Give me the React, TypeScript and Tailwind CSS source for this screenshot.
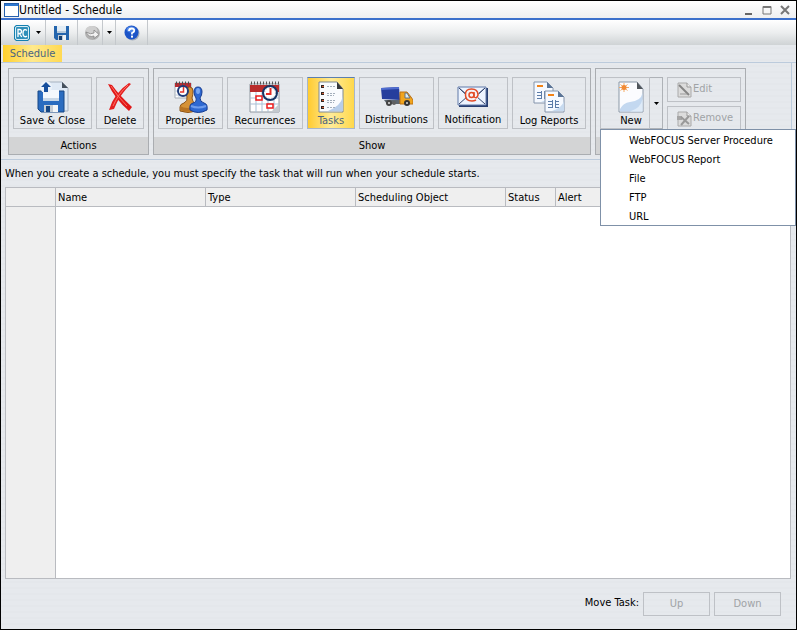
import { useState, type ReactNode } from "react";

function RcIcon() {
  return (
    <svg width="18" height="18" viewBox="0 0 18 18" aria-hidden="true">
      <path d="M3 1h12l2 2v12l-2 2H3l-2-2V3z" fill="#1580b0" />
      <rect x="2.500" y="2.500" width="13" height="13" rx="1.500" fill="#2f8fba" stroke="#d9eef7" />
      <path d="M5 13V5.500h1.500q2 0 2 2t-2 2H5M6.500 9.500L8.700 13" fill="none" stroke="#fff" strokeWidth="1.300" />
      <path d="M14 6.500q-1.200-1-2.300-.8-1.700.5-1.700 3.500t1.700 3.500q1.200.2 2.300-.8" fill="none" stroke="#fff" strokeWidth="1.300" />
    </svg>
  );
}

function DiskIcon() {
  return (
    <svg width="16" height="16" viewBox="0 0 16 16" aria-hidden="true">
      <path d="M0 1h15v14H2l-2-2z" fill="#2465ad" />
      <path d="M3 1h9v7H3z" fill="#e3edf5" />
      <path d="M3 6h9v2H3z" fill="#b9cbdb" />
      <path d="M4 10h8v5H4z" fill="#bfc9d3" />
      <path d="M5 11h3v4H5z" fill="#17406f" />
      <path d="M9 10h3v5H9z" fill="#eef2f5" />
    </svg>
  );
}

function RunIcon() {
  return (
    <svg width="17" height="17" viewBox="0 0 17 17" aria-hidden="true">
      <ellipse cx="8.500" cy="9" rx="7.500" ry="7" fill="#b0b0b0" />
      <ellipse cx="7.500" cy="6.500" rx="6" ry="4.500" fill="#cfcfcf" />
      <path d="M2 8q5 3 8 1V6l5 4.500-5 4V12Q5 14 2 8z" fill="#f2f2f2" stroke="#858585" strokeWidth=".8" />
    </svg>
  );
}

function HelpIcon() {
  return (
    <svg width="16" height="16" viewBox="0 0 16 16" aria-hidden="true">
      <circle cx="8.500" cy="8.500" r="7" fill="#a3acba" />
      <circle cx="7.500" cy="7.500" r="7" fill="#1d55c8" />
      <ellipse cx="7" cy="4.500" rx="4.500" ry="3" fill="#4f86e6" />
      <path d="M5 6q0-2.500 2.700-2.500T10.200 6Q10 7.200 8 8v1.500" fill="none" stroke="#fff" strokeWidth="1.800" />
      <rect x="7" y="10.600" width="2" height="2" fill="#fff" />
    </svg>
  );
}

function SaveCloseIcon() {
  return (
    <svg width="32" height="32" viewBox="0 0 32 32" aria-hidden="true">
      <path d="M8 1h17l6 6v23H8z" fill="#dfe9f5" stroke="#a7b2c0" />
      <path d="M25 1v6h6z" fill="#46505c" />
      <path d="M1 10h26v21H4l-3-3z" fill="#2a6cc0" stroke="#174784" />
      <path d="M6 9h16v11H6z" fill="#f3f8fd" />
      <path d="M6 17h16v3H6z" fill="#c8d8e8" />
      <path d="M7 24h14v7H7z" fill="#c6ced6" />
      <path d="M9 25h4v6H9z" fill="#174784" />
      <path d="M16 24h5v7h-5z" fill="#f4f6f8" />
      <circle cx="9" cy="6" r="6" fill="#edf3fa" />
      <path d="M9 1l5 5h-3v5H7V6H4z" fill="#174f9d" />
    </svg>
  );
}

function DeleteIcon() {
  return (
    <svg width="32" height="32" viewBox="0 0 32 32" aria-hidden="true">
      <path d="M4 3L8 4Q15 14 28 26L25 30Q11 18 4 3z" fill="#e01818" />
      <path d="M25 2L27 3Q16 13 10 28L5 29Q10 12 25 2z" fill="#e42020" />
      <path d="M7 5Q13 15 23 25M24 4Q14 13 9 25" fill="none" stroke="#ff6e62" strokeWidth="1" />
    </svg>
  );
}

function PropertiesIcon() {
  return (
    <svg width="34" height="32" viewBox="0 0 34 32" aria-hidden="true">
      <path d="M1 2h16v15H1z" fill="#fff" stroke="#a4acb5" />
      <path d="M1 2h16v4H1z" fill="#b62c32" />
      <path d="M2 2h15" stroke="#4c4c4c" strokeDasharray="1 2" strokeWidth="3" />
      <path d="M1 10h16M1 14h16M5 6v11M13 6v11" stroke="#bcc8d8" />
      <path d="M12 10q0-4 3.500-4T19 10q0 4-1 7 0 4 4 6v7q-8 3-16 0v-4q0-3 4-4 4-2 3-6-1-3-1-6z" fill="#d69237" stroke="#8b5418" />
      <path d="M6 25q7 4 16 0v4q-8 3-16 0z" fill="#b87323" />
      <path d="M20 11q0-5 4-5t4 5q0 3-2 6 0 4 4 5 4 1 3 7-9 5-17 0-1-6 3-7 4-1 3-5-2-3-2-6z" fill="#2d68d1" stroke="#173c91" />
      <ellipse cx="24" cy="10" rx="2" ry="3" fill="#79a7f2" />
      <path d="M17 25q7 3 15 0" stroke="#6d9ced" strokeWidth="2" fill="none" />
      <circle cx="9" cy="10" r="5" fill="#fff" stroke="#203b78" strokeWidth="2" />
      <path d="M9.500 6v5H6" stroke="#e3342c" strokeWidth="1.500" fill="none" />
    </svg>
  );
}

function RecurrencesIcon() {
  return (
    <svg width="32" height="32" viewBox="0 0 32 32" aria-hidden="true">
      <path d="M1 3h29v28H1z" fill="#fff" stroke="#8e969f" />
      <path d="M1 4h29v7H1z" fill="#b92c2c" />
      <path d="M2 2h28" stroke="#555" strokeWidth="3" strokeDasharray="1 2" />
      <path d="M1 17h29M1 23h29M7 11v20M13 11v20M19 11v20M25 11v20" stroke="#a9bfd5" />
      <path d="M7 15h6v4H7zM18 23h6v4h-6z" fill="#fff" stroke="#ed1c1c" strokeWidth="1.500" />
      <path d="M22 31l8-8v8z" fill="#c4c9ce" />
      <circle cx="21" cy="12" r="7" fill="#fff" stroke="#173565" strokeWidth="2" />
      <circle cx="21" cy="12" r="5.500" fill="none" stroke="#7d93b8" strokeDasharray="1 2" />
      <path d="M21.500 7v6H17" fill="none" stroke="#e52b24" strokeWidth="2" />
    </svg>
  );
}

function TasksIcon() {
  return (
    <svg width="28" height="32" viewBox="0 0 28 32" aria-hidden="true">
      <path d="M2 1h18l6 7v23H2z" fill="#f9fbfe" stroke="#7e8994" />
      <path d="M26 15Q24 25 11 30h15z" fill="#b7cde9" />
      <path d="M20 1v7h6z" fill="#35383c" />
      <path d="M4 4h3v3H4zM4 11h3v3H4zM4 18h3v3H4zM4 25h3v3H4z" fill="#322722" />
      <path d="M5 5h2v1H5zM5 12h2v1H5zM5 19h2v1H5zM5 26h2v1H5z" fill="#cc5b38" />
      <path d="M10 5.500h8M10 12.500h9M10 14.500h7M10 19.500h9M10 21.500h7M10 26.500h8" stroke="#a3aebb" strokeDasharray="2 1" />
    </svg>
  );
}

function TruckIcon() {
  return (
    <svg width="32" height="20" viewBox="0 0 32 20" aria-hidden="true">
      <path d="M3 13h27v4H6z" fill="#5c6670" />
      <path d="M0 1l18-1 1 13L1 12z" fill="#263e9d" />
      <path d="M0 1l18-1v2L0 3z" fill="#506dd0" />
      <path d="M19 5h7l4 5 2 3v4H19z" fill="#f1a51d" stroke="#bd7112" />
      <path d="M24 6h2l3 5h-5z" fill="#d8eaf5" stroke="#66717a" />
      <circle cx="8" cy="16" r="3" fill="#444" />
      <circle cx="13" cy="16" r="2" fill="#606060" />
      <circle cx="26" cy="16" r="3" fill="#333" />
      <circle cx="8" cy="16" r="1" fill="#ddd" /><circle cx="26" cy="16" r="1" fill="#ddd" />
    </svg>
  );
}

function MailIcon() {
  return (
    <svg width="32" height="22" viewBox="0 0 32 22" aria-hidden="true">
      <path d="M2 2h29v19H2z" fill="#273e70" />
      <path d="M1 1h28v18H1z" fill="#edf4ff" stroke="#6079a8" />
      <path d="M2 2l9 8-9 8M28 2l-9 8 9 8M2 2l13 12L28 2" fill="none" stroke="#35466e" />
      <circle cx="15" cy="9" r="6.500" fill="#f6f1f5" />
      <circle cx="14.500" cy="9" r="2.500" fill="none" stroke="#e34b27" strokeWidth="1.500" />
      <path d="M17 6v5q3 2 4-2 0-6-6.500-6T8.500 9q0 6 6.500 6 2 0 4-1" fill="none" stroke="#e34b27" strokeWidth="1.500" />
    </svg>
  );
}

function LogIcon() {
  return (
    <svg width="32" height="32" viewBox="0 0 32 32" aria-hidden="true">
      {[[1, 1], [12, 10]].map(([x, y]) => (
        <g key={x} transform={`translate(${x} ${y})`}>
          <path d="M0 0h13l6 6v15H0z" fill="#f5f9ff" stroke="#8494ab" />
          <path d="M19 10Q17 17 7 20h12z" fill="#c7daef" />
          <path d="M13 0v6h6z" fill="#5b7597" />
          <path d="M3 3h6v2H3z" fill="#f28317" />
          <path d="M3 10.500h5M10 10.500h4M3 13.500h5M10 13.500h4M3 16.500h5M10 16.500h4M7.500 9v8M10.500 9v8" stroke="#5c7ca8" />
        </g>
      ))}
    </svg>
  );
}

function NewIcon() {
  return (
    <svg width="28" height="32" viewBox="0 0 28 32" aria-hidden="true">
      <path d="M2 1h18l6 7v23H2z" fill="#fbfcff" stroke="#8b98a7" />
      <path d="M25.500 12Q24 20 13 21 6 22 3 28v2.500h22.500z" fill="#c3d8f0" />
      <path d="M25.500 18Q24 27 13 30.500h12.500z" fill="#dfebf8" />
      <path d="M20 1v7h6z" fill="#50565c" />
      <path d="M7 2v9M3.500 3.500l7 6M3.500 9.500l7-6M2 6.500h10" stroke="#f5a962" strokeWidth="1" />
      <circle cx="7" cy="6.500" r="2.500" fill="#f18a34" />
    </svg>
  );
}

function GrayIcon({ remove = false }: { remove?: boolean }) {
  return (
    <svg width="16" height="16" viewBox="0 0 16 16" aria-hidden="true">
      <path d="M2 1h9l4 4v10H2z" fill="#dcdcdc" stroke="#aaa" />
      <path d="M11 1v4h4" fill="#eee" stroke="#999" />
      {remove ? (
        <><path d="M1 5h5v4H1z" fill="#a5a5a5" /><path d="M5 6l8 7M13 5l-8 9" stroke="#999" strokeWidth="2" /></>
      ) : (
        <><path d="M3 3l10 10" stroke="#858585" strokeWidth="2" /><path d="M4 12h7" stroke="#999" /></>
      )}
    </svg>
  );
}

function Caret() {
  return (
    <svg width="5" height="3" viewBox="0 0 5 3" aria-hidden="true"><path d="M0 0h5L2.500 3z" fill="#000" /></svg>
  );
}

function RibbonButton({ label, width, icon, active = false, onClick }: {
  label: string; width: string; icon: ReactNode; active?: boolean; onClick?: () => void;
}) {
  const look = active
    ? "border-[#a8b6c8] border-t-[#5c7fae] bg-[linear-gradient(to_right,#ffcb30,#ffeb98_50%,#ffd84a)] text-[#4a6480]"
    : "border-[#bec1c6]";
  return (
    <button type="button" onClick={onClick} className={`flex h-[52px] shrink-0 flex-col items-center border pt-[3px] ${width} ${look}`}>
      <span className="flex h-8 items-center">{icon}</span>
      <span className="whitespace-nowrap leading-4">{label}</span>
    </button>
  );
}

function Group({ title, name, children }: { title?: string; name: string; children: ReactNode }) {
  return (
    <section className="flex h-[87px] shrink-0 flex-col justify-between border border-[#aaadb1]" aria-label={name}>
      <div className="flex gap-1 px-1 pt-2">{children}</div>
      <div className="h-[17px] bg-[#d3d4d5] pt-px text-center leading-4">{title}</div>
    </section>
  );
}

const tabs = [
  { label: "Properties", width: "w-[65px]", icon: <PropertiesIcon /> },
  { label: "Recurrences", width: "w-[76px]", icon: <RecurrencesIcon /> },
  { label: "Tasks", width: "w-12", icon: <TasksIcon /> },
  { label: "Distributions", width: "w-[75px]", icon: <TruckIcon /> },
  { label: "Notification", width: "w-[70px]", icon: <MailIcon /> },
  { label: "Log Reports", width: "w-[74px]", icon: <LogIcon /> },
];

const menuItems = ["WebFOCUS Server Procedure", "WebFOCUS Report", "File", "FTP", "URL"];

const columns = [
  { label: "", width: "w-[50px]" },
  { label: "Name", width: "w-[150px]" },
  { label: "Type", width: "w-[150px]" },
  { label: "Scheduling Object", width: "w-[150px]" },
  { label: "Status", width: "w-[50px]" },
  { label: "Alert", width: "" },
];

export default function App() {
  const [view, setView] = useState("Tasks");
  const [menuOpen, setMenuOpen] = useState(true);

  return (
    <div className="flex h-screen flex-col overflow-hidden border border-black bg-[repeating-linear-gradient(#e6e9ed_0px,#e6e9ed_4px,#e4e7eb_4px,#e4e7eb_6px)] font-['DejaVu_Sans_Condensed','Open_Sans',sans-serif] text-[11px] text-black">
      <header className="flex h-[19px] shrink-0 items-center justify-between border-b-2 border-[#3c70cb] bg-linear-to-b from-white to-[#eeeff0] pr-1 pl-[3px]">
        <div className="flex items-center">
          <svg width="15" height="14" viewBox="0 0 15 14" aria-hidden="true">
            <rect x=".5" y=".5" width="14" height="13" fill="#fff" stroke="#245fae" />
            <path d="M1 1h13v2H1z" fill="#2e79d1" />
          </svg>
          <h1 className="text-[12px] leading-4">Untitled - Schedule</h1>
        </div>
        <div className="flex gap-1">
          <button type="button" aria-label="Minimize" className="flex size-[14px] items-center justify-center">
            <svg width="10" height="10" aria-hidden="true"><path d="M1 9h7" stroke="#666" strokeWidth="2" /></svg>
          </button>
          <button type="button" aria-label="Maximize" className="flex size-[14px] items-center justify-center">
            <svg width="10" height="10" aria-hidden="true"><path d="M1 1.500h8v7.500H1zM1 2.500h8" fill="none" stroke="#777" /></svg>
          </button>
          <button type="button" aria-label="Close" className="flex size-[14px] items-center justify-center">
            <svg width="10" height="10" aria-hidden="true"><path d="M1 1l8 8M9 1L1 9" stroke="#777" strokeWidth="2" /></svg>
          </button>
        </div>
      </header>

      <div className="flex h-[25px] shrink-0 bg-linear-to-b from-white via-[#eceeef] to-[#cfd3d5] pl-1" role="toolbar" aria-label="Quick access">
        <button type="button" aria-label="Report Caster menu" className="flex w-[41px] items-center justify-between border-r border-[#c4c8cc] pr-1 pl-2"><RcIcon /><Caret /></button>
        <button type="button" aria-label="Save" className="flex w-8 items-center justify-center border-r border-[#c4c8cc]"><DiskIcon /></button>
        <button type="button" aria-label="Run" className="flex w-[25px] items-center justify-end border-r border-[#c4c8cc] pr-px"><RunIcon /></button>
        <button type="button" aria-label="Run options" className="flex w-[13px] items-center justify-center border-r border-[#c4c8cc]"><Caret /></button>
        <button type="button" aria-label="Help" className="flex w-8 items-center justify-center border-r border-[#c4c8cc]"><HelpIcon /></button>
      </div>

      <nav className="flex h-[18px] shrink-0 border-b border-[#bccbdc] pl-[2px]" aria-label="Ribbon">
        <button type="button" className="h-[17px] w-[59px] bg-[linear-gradient(to_right,#ffd02e,#ffe98c_50%,#ffd953)] leading-[17px] text-[#4a6480]">Schedule</button>
      </nav>

      <div className="mr-1 flex shrink-0 gap-1 border-r border-[#bccbdc] pt-[5px] pb-1 pl-[7px]">
        <Group name="Actions" title="Actions">
          <RibbonButton label="Save & Close" width="w-[79px]" icon={<SaveCloseIcon />} />
          <RibbonButton label="Delete" width="w-12" icon={<DeleteIcon />} />
        </Group>
        <Group name="Show" title="Show">
          {tabs.map((tab) => (
            <RibbonButton key={tab.label} {...tab} active={view === tab.label} onClick={() => setView(tab.label)} />
          ))}
        </Group>
        <div className="relative">
          <Group name="Task">
            <div className="flex">
              <RibbonButton label="New" width="w-[50px] pl-3" icon={<NewIcon />} />
              <button type="button" aria-label="New task types" aria-expanded={menuOpen} onClick={() => setMenuOpen(!menuOpen)} className="flex h-[52px] w-[13px] items-center justify-center border border-l-0 border-[#aeb2b7]"><Caret /></button>
            </div>
            <div className="flex flex-col gap-1">
              <button type="button" disabled className="flex h-[25px] w-[74px] items-center gap-px border border-[#bec1c6] pl-2 text-[#a0a3a6]"><GrayIcon />Edit</button>
              <button type="button" disabled className="flex h-[25px] w-[74px] items-center gap-px border border-[#bec1c6] pl-2 text-[#a0a3a6]"><GrayIcon remove />Remove</button>
            </div>
          </Group>
          {menuOpen && (
            <ul role="menu" className="absolute top-[61px] left-[5px] z-10 w-[196px] border border-[#7f91a8] bg-white">
              {menuItems.map((item) => (
                <li key={item} role="none">
                  <button type="button" role="menuitem" className="block h-[19px] w-full pt-[3px] pl-7 text-left leading-4 whitespace-nowrap">{item}</button>
                </li>
              ))}
            </ul>
          )}
        </div>
      </div>

      <p className="shrink-0 border-t border-[#bccbdc] pt-[7px] pb-[6px] pl-1 leading-[14px]">When you create a schedule, you must specify the task that will run when your schedule starts.</p>

      <div className="mr-[5px] ml-1 flex min-h-0 flex-1">
        <table className="w-full table-fixed border-collapse border border-[#b9bbc0] bg-white text-left">
          <thead>
            <tr className="h-[19px] bg-[#efefef]">
              {columns.map((column) => (
                <th key={column.label} scope="col" className={`border border-[#b9bbc0] px-[2px] pt-[2px] pb-0 leading-4 font-normal ${column.width}`}>{column.label}</th>
              ))}
            </tr>
          </thead>
          <tbody>
            <tr>
              <td className="border border-[#b9bbc0] bg-[#efefef]" />
              <td colSpan={5} />
            </tr>
          </tbody>
        </table>
      </div>

      <footer className="flex h-[50px] shrink-0 items-center justify-end gap-1 pr-[15px]">
        <span className="pb-[2px]">Move Task:</span>
        <button type="button" disabled className="h-6 w-[67px] border border-[#bec1c6] text-[#a0a3a6]">Up</button>
        <button type="button" disabled className="h-6 w-[67px] border border-[#bec1c6] text-[#a0a3a6]">Down</button>
      </footer>
    </div>
  );
}
